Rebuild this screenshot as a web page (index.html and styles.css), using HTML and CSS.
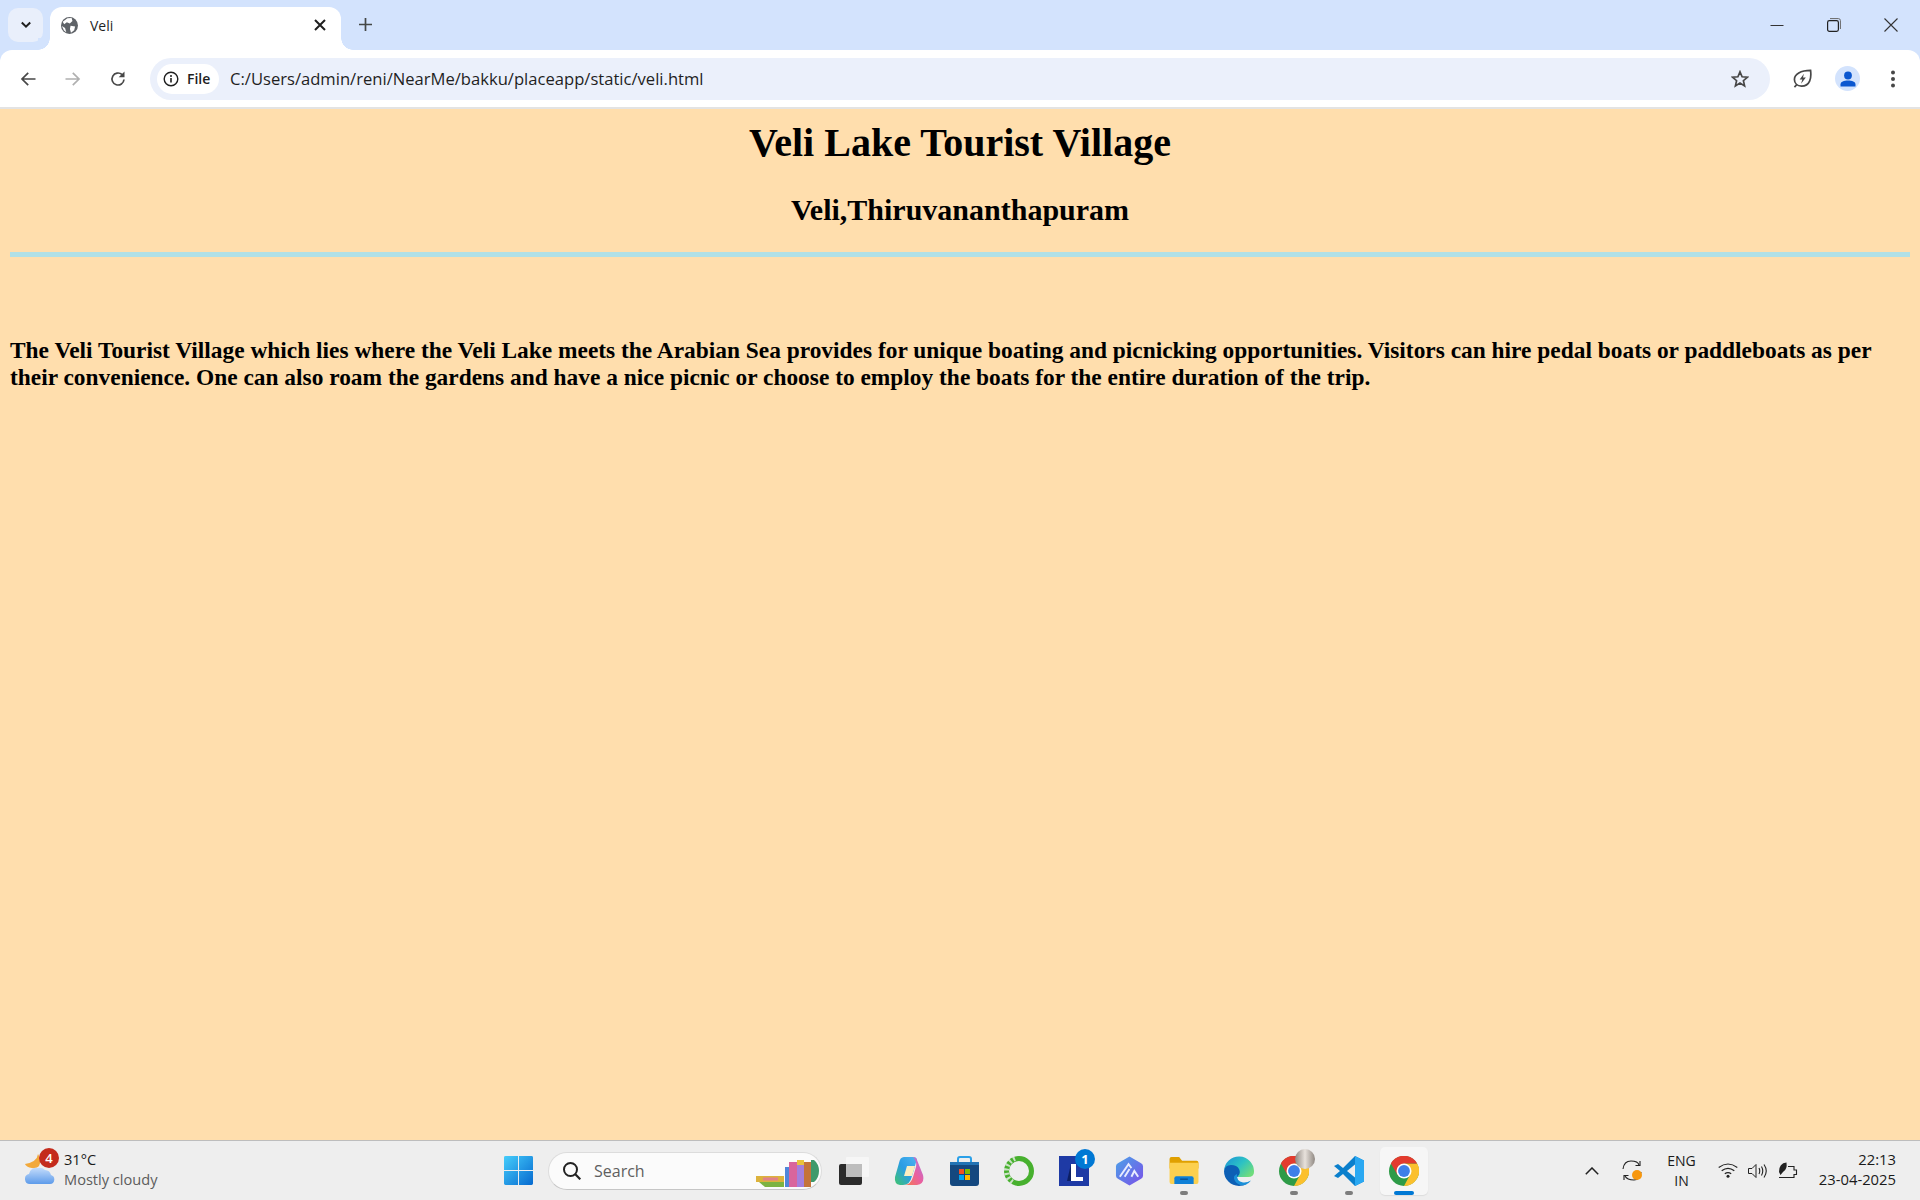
FILE: index.html
```html
<!DOCTYPE html>
<html lang="en">
<head>
<meta charset="utf-8">
<title>Veli</title>
<link rel="stylesheet" href="styles.css">
</head>
<body>
<div class="screen">
  <header class="chrome">
    <div class="tabstrip">
      <div class="tabsearch">
        <svg width="12" height="12" viewBox="0 0 12 12"><path d="M1.800 3.500 6 7.700l4.200-4.200" fill="none" stroke="#1f1f1f" stroke-width="2"/></svg>
      </div>
      <div class="tab">
        <svg class="globe" width="17" height="17" viewBox="0 0 16 16"><circle cx="8" cy="8" r="8" fill="#5f6368"/><path d="M6 1.200 10 .9l.8 2.800L8.300 6 5.500 5 3 6.800 1.600 4.500zM9 8.200l4.300.8-.9 3.500-3 2.300-1-3.600zM.8 8.500l3 1.800 1.200 4-2.200-1.500z" fill="#fff"/></svg>
        <span class="tabtitle">Veli</span>
        <svg class="tabclose" width="12" height="12" viewBox="0 0 12 12"><path d="M1 1l10 10M11 1 1 11" stroke="#1f1f1f" stroke-width="2"/></svg>
      </div>
      <svg class="newtab" width="13" height="13" viewBox="0 0 13 13"><path d="M6.500 0v13M0 6.500h13" stroke="#444746" stroke-width="1.700"/></svg>
      <div class="winctl">
        <svg width="14" height="14" viewBox="0 0 14 14"><path d="M.5 7.500h13" stroke="#333" stroke-width="1"/></svg>
        <svg width="14" height="14" viewBox="0 0 14 14"><rect x=".6" y="2.600" width="10.800" height="10.800" rx="1.800" fill="none" stroke="#222" stroke-width="1.200"/><path d="M3 .6h8.400a2 2 0 0 1 2 2V11" fill="none" stroke="#666" stroke-width="1"/></svg>
        <svg width="14" height="14" viewBox="0 0 14 14"><path d="M.5.500l13 13M13.500.500l-13 13" stroke="#333" stroke-width="1.100"/></svg>
      </div>
    </div>
    <div class="toolbar">
      <div class="nav">
        <svg width="16" height="16" viewBox="0 0 16 16"><path d="M15.500 8H2M8.200 1.800 2 8l6.200 6.200" fill="none" stroke="#474747" stroke-width="1.700"/></svg>
        <svg width="16" height="16" viewBox="0 0 16 16"><path d="M.5 8H14M7.800 1.800 14 8l-6.200 6.200" fill="none" stroke="#b0b0b0" stroke-width="1.700"/></svg>
        <svg width="16" height="16" viewBox="0 0 16 16"><path d="M14 8.500A6 6 0 1 1 12 3.500" fill="none" stroke="#474747" stroke-width="1.700"/><path d="M14.500.500v5.800H8.700z" fill="#474747"/></svg>
      </div>
      <div class="omnibox">
        <div class="chip">
          <svg width="16" height="16" viewBox="0 0 16 16"><circle cx="8" cy="8" r="6.800" fill="none" stroke="#1f1f1f" stroke-width="1.400"/><path d="M8 7v4.500" stroke="#1f1f1f" stroke-width="1.600"/><circle cx="8" cy="4.900" r="1" fill="#1f1f1f"/></svg>
          <span>File</span>
        </div>
        <span class="url">C:/Users/admin/reni/NearMe/bakku/placeapp/static/veli.html</span>
        <svg class="star" width="18" height="18" viewBox="0 0 18 18"><path d="m9 1.800 2.100 5 5.300.4-4 3.500 1.200 5.200L9 13.100l-4.600 2.800 1.200-5.200-4-3.500 5.300-.4z" fill="none" stroke="#474747" stroke-width="1.700"/></svg>
      </div>
      <div class="tools">
        <svg class="leaf" width="19" height="19" viewBox="0 0 20 20"><path d="M1.500 19 4 16.500M18.500 1.500c1 8-.5 16.500-9.500 16.500C4.500 18 1.500 15 1.500 11 1.500 5.500 8 1.500 18.500 1.500z" fill="none" stroke="#474747" stroke-width="1.800"/><path d="M11.500 5 7 11h2.800L8.500 15.500 13.500 9h-3z" fill="#474747"/></svg>
        <div class="avatar">
          <svg width="16" height="16" viewBox="0 0 16 16"><circle cx="8" cy="4.500" r="3.900" fill="#0b57d0"/><path d="M.5 15.500v-2c0-3 3.500-4 7.500-4s7.500 1 7.500 4v2z" fill="#0b57d0"/></svg>
        </div>
        <svg width="6" height="18" viewBox="0 0 6 18"><circle cx="3" cy="2.500" r="2" fill="#474747"/><circle cx="3" cy="9" r="2" fill="#474747"/><circle cx="3" cy="15.500" r="2" fill="#474747"/></svg>
      </div>
    </div>
  </header>

  <main class="page">
    <h1>Veli Lake Tourist Village</h1>
    <h2>Veli,Thiruvananthapuram</h2>
    <hr class="rule">
    <h3>The Veli Tourist Village which lies where the Veli Lake meets the Arabian Sea provides for unique boating and picnicking opportunities. Visitors can hire pedal boats or paddleboats as per their convenience. One can also roam the gardens and have a nice picnic or choose to employ the boats for the entire duration of the trip.</h3>
  </main>

  <footer class="taskbar">
    <div class="weather">
      <div class="wicon">
        <svg width="30" height="30" viewBox="0 0 30 30"><defs><linearGradient id="cloud" x1="0" y1="0" x2="0" y2="1"><stop offset="0" stop-color="#c4dcfb"/><stop offset="1" stop-color="#5d9bea"/></linearGradient></defs><path d="M13 0q-1 8-13 10c2 4 10 6 14 2q3-6-1-12z" fill="#f2a93b"/><path d="M5 30a5 5 0 0 1-1-9.900A7 7 0 0 1 13 14q4-1 7 2a6.500 6.500 0 0 1 6 5 4.600 4.600 0 0 1-1 9z" fill="url(#cloud)"/></svg>
        <span class="wbadge">4</span>
      </div>
      <div class="wtext"><span class="wtemp">31°C</span><span class="wdesc">Mostly cloudy</span></div>
    </div>

    <div class="apps">
      <div class="app first">
        <svg width="29" height="29" viewBox="0 0 30 30"><defs><linearGradient id="win" x1="0" y1="0" x2="1" y2="1"><stop offset="0" stop-color="#45cdfb"/><stop offset="1" stop-color="#0669cf"/></linearGradient></defs><path d="M0 1.500A1.500 1.500 0 0 1 1.500 0h13v14.500H0zM15.500 0h13A1.500 1.500 0 0 1 30 1.500v13H15.500zM0 15.500h14.500V30h-13A1.500 1.500 0 0 1 0 28.500zM15.500 15.500H30v13a1.500 1.500 0 0 1-1.500 1.500h-13z" fill="url(#win)"/></svg>
      </div>
      <div class="search">
        <svg width="18" height="18" viewBox="0 0 18 18"><circle cx="7.500" cy="7.500" r="6.500" fill="none" stroke="#222" stroke-width="2"/><path d="m12.300 12.300 5 5" stroke="#222" stroke-width="2.200"/></svg>
        <span class="stext">Search</span>
        <svg class="books" width="63" height="29" viewBox="0 0 63 29"><path d="M0 17h28v6H0z" fill="#dcb23c"/><path d="M7 18.500h15v3H7z" fill="#e0808a"/><path d="M3 23h25v5H9z" fill="#7cb342"/><path d="M29 8h4v20h-4z" fill="#4f86d9"/><path d="M33 3h8v25h-8z" fill="#d9659c"/><path d="M41 1h7v27h-7z" fill="#a47fdc"/><path d="M41 1h7v5h-7z" fill="#e8c33c"/><path d="M48 3h7v25h-7z" fill="#c4733a"/><path d="M55 1h3q5 4 5 11t-5 11h-3z" fill="#3f9a6b"/></svg>
      </div>
      <div class="app">
        <svg width="30" height="28" viewBox="0 0 30 28"><rect y="7" width="23" height="21" rx="2" fill="#2b2b2b"/><rect x="7" width="23" height="20" rx="1" fill="#f6f6f6"/><path d="M7 7h16v13H7z" fill="#bdbdbd"/></svg>
      </div>
      <div class="app">
        <svg width="30" height="28" viewBox="0 0 30 28"><defs><linearGradient id="cpa" x1="0" y1="1" x2="1" y2="0"><stop offset="0" stop-color="#3fc46b"/><stop offset=".5" stop-color="#2a9de4"/><stop offset="1" stop-color="#4fb4f0"/></linearGradient><linearGradient id="cpb" x1="0" y1="1" x2="1" y2="0"><stop offset="0" stop-color="#f57c4c"/><stop offset=".5" stop-color="#ea5fa0"/><stop offset="1" stop-color="#a678ea"/></linearGradient></defs><path d="M10 0h9q3 0 4 2l-5 17q-2 9-9 9H6Q0 27 1 20L5 6q1-6 5-6z" fill="url(#cpa)"/><path d="M19 0q3 0 4 3l6 15q2 9-6 10H11q6-1 8-8l3-10q1-6-3-10z" fill="url(#cpb)"/><path d="M13 9h8l-3 10h-8z" fill="#fbeec0"/></svg>
      </div>
      <div class="app">
        <svg width="29" height="30" viewBox="0 0 29 30"><path d="M0 6h29v21a3 3 0 0 1-3 3H3a3 3 0 0 1-3-3z" fill="#14487f"/><path d="M8 8V3q0-2 2-2h9q2 0 2 2v5" fill="none" stroke="#2aa0e8" stroke-width="2"/><path d="M0 6h29v3H0z" fill="#2273b4"/><rect x="9" y="13" width="5" height="5" fill="#f25022"/><rect x="15" y="13" width="5" height="5" fill="#7fba00"/><rect x="9" y="19" width="5" height="5" fill="#00a4ef"/><rect x="15" y="19" width="5" height="5" fill="#ffb900"/></svg>
      </div>
      <div class="app">
        <svg width="30" height="30" viewBox="0 0 30 30"><circle cx="15" cy="15" r="12.500" fill="none" stroke="#47b02e" stroke-width="5"/><path d="M11 2.500A13 13 0 0 0 2.500 15a13 13 0 0 0 6 11" fill="none" stroke="#eeeeee" stroke-width="5" stroke-dasharray="2 2.500" opacity=".8"/></svg>
      </div>
      <div class="app">
        <svg width="30" height="30" viewBox="0 0 30 30"><rect width="30" height="30" fill="#1e3aa5"/><path d="M12 8h5v13h7v4H12z" fill="#fff"/><path d="M12 8 8 25h4z" fill="#0d1f63"/></svg>
        <span class="appbadge">1</span>
      </div>
      <div class="app">
        <svg width="29" height="30" viewBox="0 0 30 30"><defs><linearGradient id="hx" x1="0" y1="0" x2="1" y2="1"><stop offset="0" stop-color="#4ba3e8"/><stop offset="1" stop-color="#7a4fe8"/></linearGradient></defs><path d="M15 0 27 7q2 1 2 3v10q0 2-2 3L15 30 3 23q-2-1-2-3V10q0-2 2-3z" fill="url(#hx)"/><path d="M5 21 14 8l3 4M10 21l5-8M17 21l3-6 4 6" fill="none" stroke="#e8ecff" stroke-width="2"/></svg>
      </div>
      <div class="app dot">
        <svg width="30" height="27" viewBox="0 0 30 28"><path d="M0 2q0-2 2-2h8l3 4h15q2 0 2 2v6H0z" fill="#e0a000"/><path d="M0 6h30v20q0 2-2 2H2q-2 0-2-2z" fill="#fcd04f"/><path d="M5 22q0-2 2-2h16q2 0 2 2v6H5z" fill="#0f80d7"/><path d="M11 23h8" stroke="#0c4f8f" stroke-width="1.400"/></svg>
      </div>
      <div class="app">
        <svg width="30" height="30" viewBox="0 0 30 30"><defs><linearGradient id="edg" x1="0" y1="0" x2="1" y2=".7"><stop offset="0" stop-color="#1a8fd8"/><stop offset=".55" stop-color="#2cc2c4"/><stop offset="1" stop-color="#6fdc7c"/></linearGradient></defs><path d="M0 15a15 15 0 0 1 30 1q0 5-6 5H12.500q0-7-6-8T0 15z" fill="url(#edg)"/><path d="M0 15q1-6 7-6 6 0 8 4t-1 7q-3 3 0 6 3 3 9 2-4 2-8 2A15 15 0 0 1 0 15z" fill="#0c5fb5"/><path d="M13 18q-1 7 6 8.500 4 .5 8-2-2 3-6 4.500-7 1-10-4t2-7z" fill="#1a8fd8"/></svg>
      </div>
      <div class="app dot">
        <svg width="30" height="30" viewBox="0 0 32 32"><use href="#chrome-mark"/></svg>
        <span class="photo"></span>
      </div>
      <div class="app dot">
        <svg width="30" height="30" viewBox="0 0 30 30"><path d="M21 0 30 4.500v21L21 30 9 18l-5 4-4-2 6-5-6-5 4-2 5 4z" fill="#0a7fcc"/><path d="M21 0 30 4.500v21L21 30z" fill="#2aa8f2"/><path d="M21 8.500v13L13 15z" fill="#eeeeee"/></svg>
      </div>
      <div class="app active">
        <svg width="30" height="30" viewBox="0 0 32 32"><symbol id="chrome-mark" viewBox="0 0 32 32"><circle cx="16" cy="16" r="16" fill="#2e9b47"/><path d="M30 8 A16 16 0 0 1 16 32 L23 19 L16 8z" fill="#fbc02d"/><path d="M2 8A16 16 0 0 1 30 8H16L9 12z" fill="#e33b2e"/><path d="M2 8 9 20 16 16 9 10z" fill="#e33b2e"/><circle cx="16" cy="16" r="8" fill="#fff"/><circle cx="16" cy="16" r="6.300" fill="#3f7fe8"/></symbol><use href="#chrome-mark"/></svg>
      </div>
    </div>

    <div class="tray">
      <svg class="chev" width="14" height="8" viewBox="0 0 14 8"><path d="M.8 7.300 7 1l6.200 6.300" fill="none" stroke="#222" stroke-width="1.500"/></svg>
      <div class="sync">
        <svg width="20" height="21" viewBox="0 0 20 21"><path d="M1 9q1-8 8-8t8 4M19 12q-1 8-7 8-7 0-9-4" fill="none" stroke="#222" stroke-width="1.100"/><path d="M18 1v4.500h-4.500M2 20v-4.500h4.500" fill="none" stroke="#222" stroke-width="1.100"/><circle cx="15" cy="15" r="5" fill="#f7970e"/></svg>
      </div>
      <div class="lang"><span>ENG</span><span>IN</span></div>
      <div class="icons">
        <svg width="20" height="15" viewBox="0 0 20 15"><path d="M.7 4.500q9.300-7 18.600 0M3.700 7.800q6.300-5 12.600 0M6.800 10.800q3.200-2.300 6.400 0" fill="none" stroke="#222" stroke-width="1.200"/><circle cx="10" cy="13.300" r="1.500" fill="#222"/></svg>
        <svg width="20" height="16" viewBox="0 0 20 16"><path d="M.5 5.500h3.500L8 1.500v13l-4-4H.5z" fill="none" stroke="#222" stroke-width="1"/><path d="M11 5q1.500 3 0 6M13.500 3.500q2.500 4.500 0 9M16 1.500q4.500 6.500 0 13" fill="none" stroke="#222" stroke-width="1.100"/></svg>
        <svg width="20" height="17" viewBox="0 0 20 17"><path d="M1 15.500h15v-3h2.500V8H16V4.500h-6" fill="none" stroke="#222" stroke-width="1.100"/><path d="M1 10Q1 1 8.500.5q1 7-3.500 9.500l-2.500 3z" fill="#222"/></svg>
      </div>
      <div class="clock"><span>22:13</span><span>23-04-2025</span></div>
    </div>
  </footer>
</div>
</body>
</html>
```

FILE: styles.css
```css
* { box-sizing: border-box; }
html, body { margin: 0; height: 100%; }
body { overflow: hidden; }
.screen {
  width: 1920px;
  height: 1200px;
  display: flex;
  flex-direction: column;
  font-family: "Open Sans", "Noto Sans", sans-serif;
}
.chrome { flex: none; height: 109px; background: #d3e3fd; display: flex; flex-direction: column; }
.tabstrip { height: 50px; flex: none; display: flex; align-items: flex-start; }
.tabsearch {
  width: 35px; height: 34px; margin: 8px 0 0 8px;
  background: #e9effb; border-radius: 10px;
  display: flex; align-items: center; justify-content: center;
}
.tab {
  width: 291px; height: 43px; margin: 7px 0 0 7px;
  padding: 0 15px 7px 11px;
  background: #fff; border-radius: 12px 12px 0 0;
  display: flex; align-items: center;
  position: relative;
}
.tab::before, .tab::after {
  content: ""; position: absolute; bottom: 0; width: 12px; height: 12px;
  background: radial-gradient(circle at var(--c) 0, #d3e3fd 11.500px, #fff 12px);
}
.tab::before { left: -12px; --c: 0; }
.tab::after { right: -12px; --c: 12px; }
.globe { flex: none; }
.tabtitle { margin-left: 12px; font-size: 14px; color: #1f1f1f; flex: 1; }
.tabclose { flex: none; }
.newtab { margin: 18px 0 0 18px; }
.winctl { margin-left: auto; display: flex; gap: 43px; padding: 18px 22px 0 0; }
.toolbar {
  height: 59px; flex: none; background: #fff; border-radius: 12px 12px 0 0;
  border-bottom: 2px solid #e3e3e3;
  display: flex; align-items: center;
  padding-left: 20px;
}
.nav { display: flex; gap: 29px; align-items: center; }
.omnibox {
  width: 1620px; height: 42px; margin-left: 24px;
  background: #ebf0fb; border-radius: 21px;
  display: flex; align-items: center;
  padding: 0 21px 0 7px;
}
.chip {
  height: 30px; width: 62px; flex: none; background: #fff; border-radius: 15px;
  display: flex; align-items: center; gap: 8px; padding-left: 6px;
  font-size: 14px; font-weight: 600; color: #1f1f1f;
}
.url { margin-left: 11px; font-size: 16.600px; color: #1f1f1f; flex: 1; }
.tools { display: flex; align-items: center; margin-left: 23px; }
.leaf { margin-right: 23px; }
.avatar {
  width: 25px; height: 25px; border-radius: 50%; background: #d3e3fd;
  display: flex; align-items: center; justify-content: center; margin-right: 30px;
}
.page {
  flex: 1; min-height: 0; background: #ffdead; padding: 0 10px;
  font-family: "Liberation Serif", "Times New Roman", serif; color: #000;
}
h1 { font-size: 40px; line-height: 46px; text-align: center; margin: 0; padding-top: 11px; }
h2 { font-size: 30px; line-height: 34px; text-align: center; margin: 0; padding-top: 27px; }
.rule { height: 5px; border: 0; background: #b0e0e6; margin: 25px 0 0; }
h3 { font-size: 23.400px; line-height: 27px; margin: 0; padding-top: 80px; }
.taskbar {
  flex: none; height: 60px; background: #eeeeee; border-top: 1px solid #bdbdbd;
  display: grid; grid-template-columns: 1fr auto 1fr; align-items: center;
}
.weather { display: flex; align-items: center; padding-left: 25px; }
.wicon { width: 39px; height: 44px; position: relative; display: flex; align-items: flex-end; padding-bottom: 9px; }
.wbadge {
  position: absolute; left: 14px; top: -1px; width: 20px; height: 20px; border-radius: 50%;
  background: #c42b1c; color: #fff; font-size: 13px; font-weight: 600;
  display: flex; align-items: center; justify-content: center;
}
.wtext { display: flex; flex-direction: column; font-size: 14.600px; line-height: 20px; margin-top: -4px; }
.wtemp { color: #1a1a1a; }
.wdesc { color: #5c5c5c; }
.apps { display: flex; align-items: center; padding-left: 2px; }
.app {
  width: 48px; height: 48px; margin-right: 7px; position: relative; flex: none;
  display: flex; align-items: center; justify-content: center;
}
.app.first { margin-right: 6px; }
.app.active { background: #f6f6f6; border-radius: 5px; box-shadow: 0 1px 1px #dcdcdc; margin-right: 0; }
.app.active::after {
  content: ""; position: absolute; bottom: 0; left: 14px; width: 20px; height: 4px;
  border-radius: 2px; background: #0078d4;
}
.app.dot::after {
  content: ""; position: absolute; bottom: 0; left: 20px; width: 8px; height: 4px;
  border-radius: 2px; background: #7d7d7d;
}
.appbadge {
  position: absolute; right: 3px; top: 2px; width: 20px; height: 20px; border-radius: 50%;
  background: #0078d4; color: #fff; font-size: 13px; font-weight: 700;
  display: flex; align-items: center; justify-content: center;
}
.photo {
  position: absolute; right: 3px; top: 2px; width: 20px; height: 20px; border-radius: 50%;
  background: linear-gradient(90deg, #8f8882, #e8e2dc 50%, #8f8882);
}
.search {
  width: 274px; height: 38px; margin-right: 8px; flex: none;
  background: #fbfbfb; border: 1px solid #dcdcdc; border-bottom-color: #c6c6c6; border-radius: 19px;
  display: flex; align-items: center; padding-left: 14px; position: relative; overflow: hidden;
}
.stext { margin-left: 13px; font-size: 16px; color: #5f5f5f; }
.books { position: absolute; right: 2px; bottom: 1px; }
.tray { display: flex; align-items: center; justify-content: flex-end; font-size: 14px; color: #1a1a1a; }
.chev { margin-right: 23px; }
.sync { margin-right: 25px; display: flex; }
.lang { display: flex; flex-direction: column; align-items: center; line-height: 20px; margin-right: 22px; }
.icons { display: flex; gap: 10px; align-items: center; margin-right: 21px; }
.clock { display: flex; flex-direction: column; align-items: flex-end; font-size: 14.800px; line-height: 20px; margin: -3px 24px 0 0; }
```
